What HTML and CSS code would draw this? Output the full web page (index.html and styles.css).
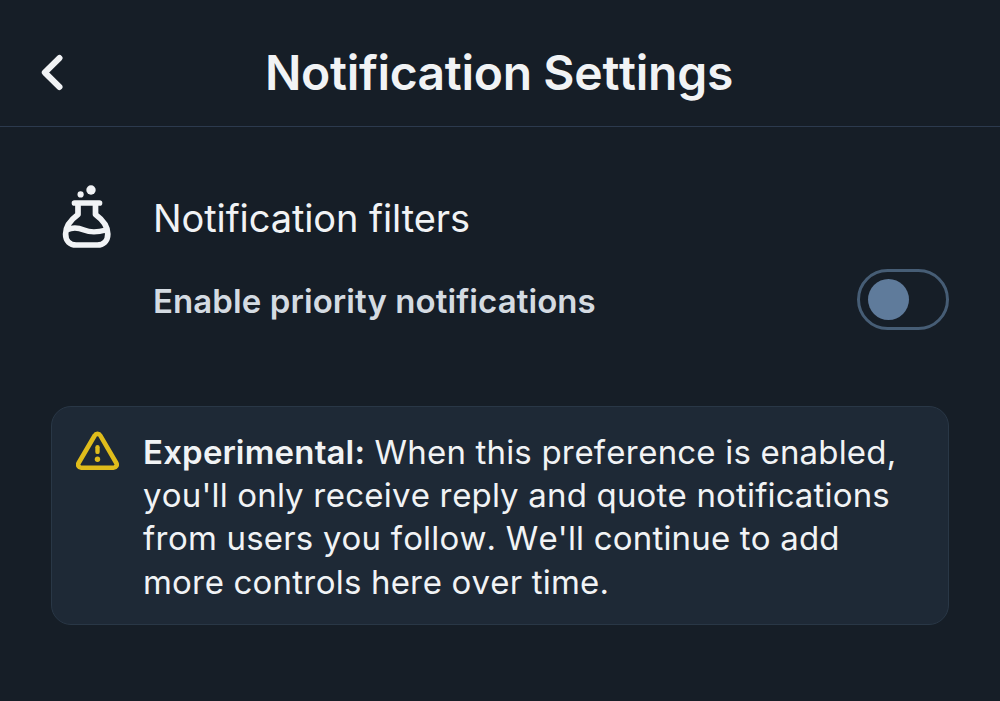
FILE: index.html
```html
<!DOCTYPE html>
<html lang="en">
<head>
<meta charset="UTF-8" />
<meta name="viewport" content="width=device-width, initial-scale=1" />
<title>Notification Settings</title>
<link rel="stylesheet" href="styles.css">
</head>
<body>

<header class="header">
  <button class="back-btn" aria-label="Back">
    <svg width="24" height="38" viewBox="0 0 24 38" fill="none"><path d="M19.500 4 4.800 18.500l14.700 14.500" stroke="#f1f3f5" stroke-width="6" stroke-linecap="round" stroke-linejoin="round"/></svg>
  </button>
  <h1>Notification Settings</h1>
</header>

<main class="content">
  <section class="filters">
    <svg class="beaker" width="50" height="66" viewBox="0 0 50 66" fill="none">
      <circle cx="29" cy="5" r="4.700" fill="#f1f3f5"/>
      <circle cx="18.600" cy="9.400" r="3.100" fill="#f1f3f5"/>
      <path d="M12.500 18h25M16 18v11.500C8.500 35 3.600 41.500 3.600 49c0 7 4.500 11 10.500 11h21.200c6 0 10.500-4 10.500-11 0-7.500-4.800-14-12.300-19.500V18" stroke="#f1f3f5" stroke-width="5.700" stroke-linecap="round" stroke-linejoin="round"/>
      <path d="M5 45c5-2.800 11-2.500 17 0s13 2.500 22 0" stroke="#f1f3f5" stroke-width="5.400"/>
    </svg>
    <div class="filters-body">
      <h2>Notification filters</h2>
      <div class="toggle-row">
        <span class="toggle-label">Enable priority notifications</span>
        <button class="switch" role="switch" aria-checked="false" aria-label="Enable priority notifications"><span class="knob"></span></button>
      </div>
    </div>
  </section>

  <section class="notice">
    <svg class="warning" width="43" height="40" viewBox="0 0 43 40" fill="none">
      <path d="M18.700 4.500a3.200 3.200 0 0 1 5.600 0l16 27.500a3.200 3.200 0 0 1-2.800 4.800H5.200A3.200 3.200 0 0 1 2.600 32z" stroke="#dfbc1b" stroke-width="4.600" stroke-linejoin="round"/>
      <path d="M21.500 16.300v4.600" stroke="#dfbc1b" stroke-width="4.400" stroke-linecap="round"/>
      <circle cx="21.500" cy="28.300" r="2.700" fill="#dfbc1b"/>
    </svg>
    <p><b>Experimental:</b> When this preference is enabled, you'll only receive reply and quote notifications from users you follow. We'll continue to add more controls here over time.</p>
  </section>
</main>

</body>
</html>
```
FILE: styles.css
```css
* {
  box-sizing: border-box;
}
body {
  margin: 0;
  height: 701px;
  font-family: Inter, sans-serif;
  background: #161e27;
  color: #f1f3f5;
  overflow: hidden;
}
h1, h2, p {
  margin: 0;
}
button {
  padding: 0;
  border: none;
  background: none;
  cursor: pointer;
}
.header {
  display: grid;
  grid-template-columns: 64px 1fr 66px;
  align-items: center;
  height: 127px;
  padding: 20px 0 0;
  border-bottom: 1px solid #2c3a4e;
}
.back-btn {
  display: flex;
  justify-content: flex-end;
}
.header h1 {
  font-size: 48px;
  line-height: 60px;
  font-weight: 600;
  letter-spacing: -0.25px;
  word-spacing: -0.5px;
  font-kerning: none;
  text-align: center;
  white-space: nowrap;
}
.content {
  padding: 58px 51px 0;
}
.filters {
  display: flex;
  gap: 41px;
  padding-left: 11px;
}
.beaker,
.warning {
  flex: none;
}
.filters-body {
  flex: 1;
}
.filters h2 {
  margin-top: 8px;
  font-size: 38px;
  line-height: 50px;
  font-weight: 400;
  letter-spacing: -0.1px;
}
.toggle-row {
  display: flex;
  align-items: center;
  justify-content: space-between;
  margin-top: 26px;
}
.toggle-label {
  padding-top: 3px;
  font-size: 33px;
  font-weight: 600;
  line-height: 58px;
  letter-spacing: 0.08px;
  color: #d4dbe2;
}
.switch {
  display: flex;
  align-items: center;
  width: 92px;
  height: 61px;
  padding-left: 8px;
  border: 3px solid #465d75;
  border-radius: 31px;
}
.knob {
  width: 41px;
  height: 41px;
  border-radius: 50%;
  background: #5f7b9b;
}
.notice {
  display: flex;
  gap: 24px;
  height: 219px;
  margin-top: 76px;
  padding: 24px;
  border: 1px solid #293746;
  border-radius: 20px;
  background: #1e2936;
}
.notice p {
  font-size: 33px;
  line-height: 43.200px;
  letter-spacing: 0.18px;
  font-kerning: none;
}
.notice b {
  font-weight: 600;
}
```
